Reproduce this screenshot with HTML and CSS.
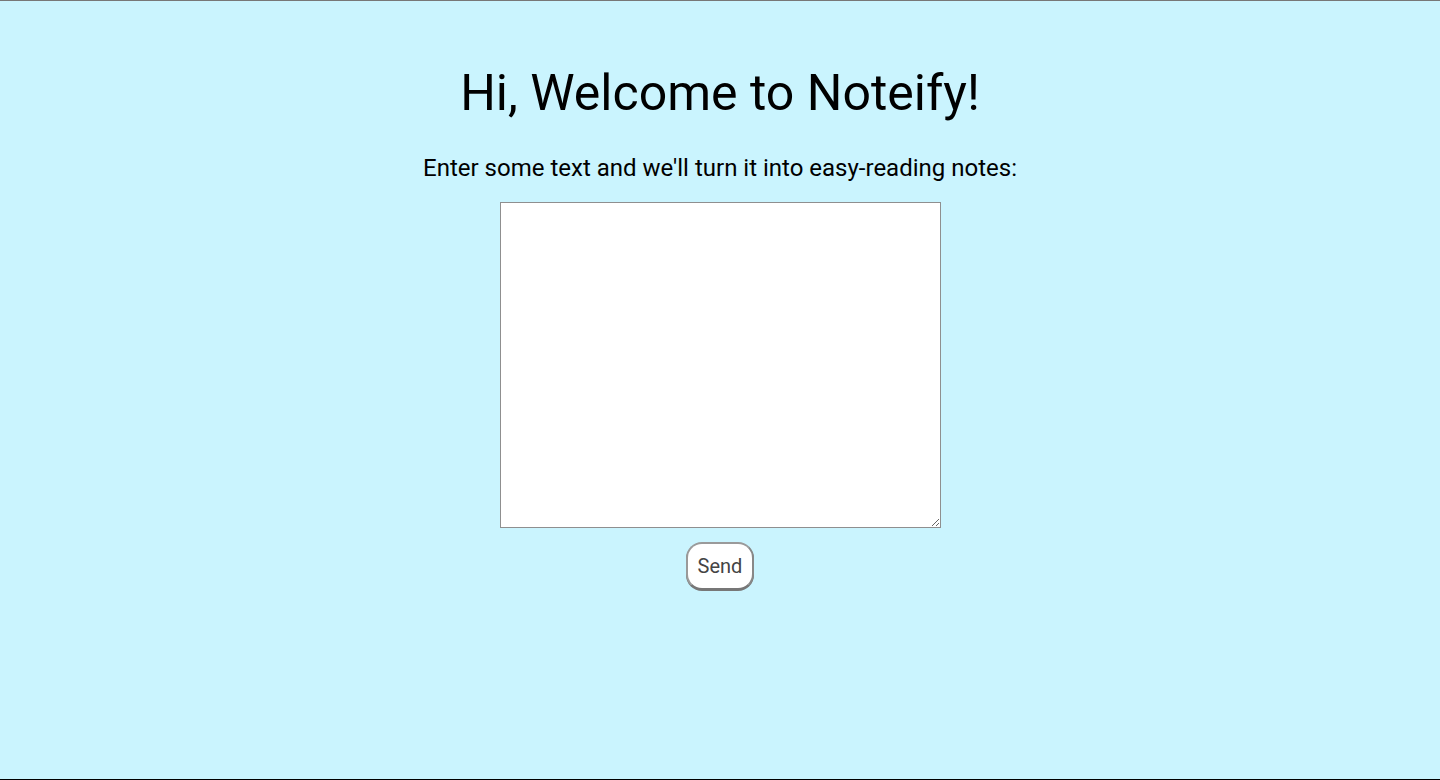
FILE: index.html
```html
<!DOCTYPE html>
<html>
<head>
<meta charset="utf-8">
<title>Noteify</title>
<link rel="stylesheet" href="styles.css">
</head>
<body>
<div class="page">
  <h1 class="title">Hi, Welcome to Noteify!</h1>
  <p class="lead">Enter some text and we'll turn it into easy-reading notes:</p>
  <textarea class="input"></textarea>
  <button class="send">Send</button>
</div>
</body>
</html>
```
FILE: styles.css
```css
html, body {
  margin: 0;
  padding: 0;
}
body {
  background: #caf4fe;
  font-family: Roboto, "Liberation Sans", sans-serif;
}
.page {
  box-sizing: border-box;
  height: 780px;
  border-top: 1px solid #777;
  border-bottom: 1px solid #000;
  display: flex;
  flex-direction: column;
  align-items: center;
}
.title {
  margin: 63px 0 0;
  font-size: 50px;
  font-weight: 400;
  line-height: 58px;
  color: #000;
}
.lead {
  margin: 32px 0 0;
  font-size: 24px;
  line-height: 28px;
  color: #000;
}
.input {
  box-sizing: border-box;
  margin-top: 20px;
  width: 441px;
  height: 326px;
  border: 1px solid #8f8f8f;
  background: #fff;
  padding: 2px;
}
.send {
  margin-top: 14px;
  width: 68px;
  height: 48px;
  border-radius: 16px;
  border: 2px solid #9a9a9a;
  border-bottom-color: #777;
  border-right-color: #888;
  box-shadow: 0 1px 0 #777;
  background: #fff;
  font-family: Roboto, "Liberation Sans", sans-serif;
  font-size: 20px;
  color: #444;
  padding: 0;
}
```
